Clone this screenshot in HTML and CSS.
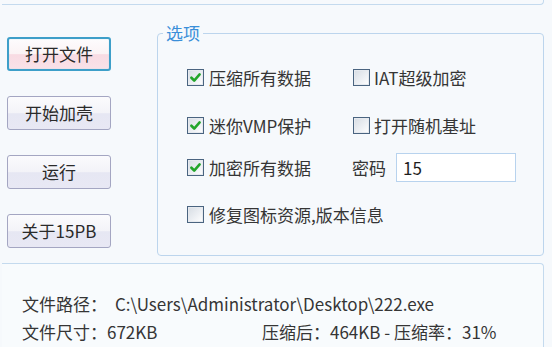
FILE: index.html
```html
<!DOCTYPE html>
<html lang="zh-CN">
<head>
<meta charset="utf-8">
<title>15PB</title>
<link rel="stylesheet" href="styles.css">
</head>
<body>
<div class="app">
  <div class="top-frame"></div>
  <div class="main">
    <div class="buttons">
      <button class="btn focused">打开文件</button>
      <button class="btn">开始加壳</button>
      <button class="btn">运行</button>
      <button class="btn">关于15PB</button>
    </div>
    <fieldset class="options">
      <legend class="legend">选项</legend>
      <div class="opts-body">
        <div class="row r1">
          <label class="opt col-left"><span class="box checked"><svg viewBox="0 0 12 12"><path d="M2.2 6.2 L4.8 8.8 L9.8 3.2" fill="none" stroke="#22a52a" stroke-width="2.4" stroke-linecap="round" stroke-linejoin="round"/></svg></span>压缩所有数据</label>
          <label class="opt"><span class="box"></span>IAT超级加密</label>
        </div>
        <div class="row r2">
          <label class="opt col-left"><span class="box checked"><svg viewBox="0 0 12 12"><path d="M2.2 6.2 L4.8 8.8 L9.8 3.2" fill="none" stroke="#22a52a" stroke-width="2.4" stroke-linecap="round" stroke-linejoin="round"/></svg></span>迷你VMP保护</label>
          <label class="opt"><span class="box"></span>打开随机基址</label>
        </div>
        <div class="row r3">
          <label class="opt col-left"><span class="box checked"><svg viewBox="0 0 12 12"><path d="M2.2 6.2 L4.8 8.8 L9.8 3.2" fill="none" stroke="#22a52a" stroke-width="2.4" stroke-linecap="round" stroke-linejoin="round"/></svg></span>加密所有数据</label>
          <div class="pwd"><span class="pwd-label">密码</span><span class="input">15</span></div>
        </div>
        <div class="row r4">
          <label class="opt col-left wide"><span class="box"></span>修复图标资源,版本信息</label>
        </div>
      </div>
    </fieldset>
  </div>
  <div class="info">
    <div class="line"><span class="key-short">文件路径：</span><span class="path">C:\Users\Administrator\Desktop\222.exe</span></div>
    <div class="line"><span class="key">文件尺寸：672KB</span><span class="ratio">压缩后：464KB - 压缩率：31%</span></div>
  </div>
</div>
</body>
</html>
```

FILE: styles.css
```css
* { box-sizing: border-box; }
html, body {
  margin: 0;
  padding: 0;
  background: #f6f9fc;
}
body {
  width: 552px;
  height: 347px;
  overflow: hidden;
  font-family: "Noto Sans CJK SC", "Noto Sans", sans-serif;
  font-size: 17px;
  color: #353535;
}
.app {
  display: flex;
  flex-direction: column;
}
.top-frame {
  margin-left: 2px;
  width: 542px;
  height: 5px;
  border-bottom: 1px solid #c4daee;
  border-right: 1px solid #c4daee;
  border-bottom-right-radius: 4px;
}
.main {
  display: flex;
  align-items: flex-start;
  margin-top: 18px;
}
.buttons {
  display: flex;
  flex-direction: column;
  gap: 25px;
  margin-left: 7px;
  padding-top: 14px;
  width: 150px;
}
.btn {
  width: 104px;
  height: 34px;
  padding: 0;
  font-family: inherit;
  font-size: 17px;
  line-height: 32px;
  color: #2a2a2a;
  border: 1px solid #a4a6c2;
  border-radius: 3px;
  background: linear-gradient(#fbfbfd 0%, #f3f3f8 50%, #e6e7f3 52%, #e8e8f4 100%);
}
.btn.focused {
  border: 2px solid #3d9fc9;
  line-height: 30px;
  background: linear-gradient(#fdfcfd 0%, #fbf3f5 50%, #f8dbe3 52%, #f9e2e8 100%);
  box-shadow: inset 0 0 1px #8fd0ec;
}
.options {
  margin: 0;
  width: 387px;
  height: 233px;
  padding: 0;
  border: 1px solid #bcd5ed;
  border-radius: 4px;
}
.legend {
  margin-left: 5px;
  padding: 0 3px;
  font-size: 17px;
  line-height: 20px;
  color: #3a8fd9;
}
.opts-body {
  padding-left: 29px;
}
.row {
  display: flex;
  align-items: center;
  height: 30px;
}
.r1 { margin-top: 19px; }
.r2 { margin-top: 18px; }
.r3 { margin-top: 12px; }
.r4 { margin-top: 17px; }
.opt {
  display: flex;
  align-items: center;
  white-space: nowrap;
}
.col-left { width: 166px; }
.col-left.wide { width: auto; }
.box {
  display: inline-flex;
  align-items: center;
  justify-content: center;
  width: 17px;
  height: 17px;
  margin-right: 5px;
  border: 1px solid #4a6480;
  background: linear-gradient(135deg, #d6dce3 0%, #eceff3 55%, #ffffff 100%);
  box-shadow: inset 0 0 0 1px #e6eaef;
}
.box svg {
  width: 13px;
  height: 13px;
}
.opt:not(.col-left) .box { margin-right: 4px; }
.pwd {
  display: flex;
  align-items: center;
  margin-left: -1px;
}
.pwd-label {
  width: 44px;
}
.input {
  display: flex;
  align-items: center;
  width: 120px;
  height: 29px;
  padding-left: 6px;
  background: #ffffff;
  border: 1px solid #b8d3ee;
  color: #1e1e1e;
}
.info {
  margin-top: 7px;
  margin-left: 2px;
  width: 542px;
  height: 90px;
  border-top: 1px solid #c4daee;
  border-right: 1px solid #c4daee;
  border-top-right-radius: 4px;
  padding-left: 20px;
  padding-top: 25px;
  background: #f8fbfd;
}
.line {
  display: flex;
  height: 28px;
  align-items: center;
  white-space: nowrap;
}
.path { margin-left: 8px; }
.key { width: 240px; }
```
